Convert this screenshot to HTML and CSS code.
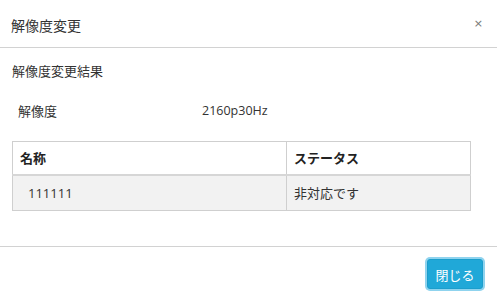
FILE: index.html
```html
<!DOCTYPE html>
<html lang="ja">
<head>
<meta charset="utf-8">
<link rel="stylesheet" href="styles.css">
</head>
<body>
<div class="dialog">
  <div class="header">
    <div class="title">解像度変更</div>
    <div class="close">×</div>
  </div>
  <div class="content">
    <div class="subtitle">解像度変更結果</div>
    <div class="info-row">
      <div class="label">解像度</div>
      <div class="value">2160p30Hz</div>
    </div>
    <table class="result">
      <thead>
        <tr><th class="col-name">名称</th><th>ステータス</th></tr>
      </thead>
      <tbody>
        <tr><td class="cell-name">111111</td><td>非対応です</td></tr>
      </tbody>
    </table>
  </div>
  <div class="footer">
    <button class="btn-close">閉じる</button>
  </div>
</div>
</body>
</html>
```
FILE: styles.css
```css
html, body {
  margin: 0;
  padding: 0;
  background: #fff;
}
body {
  font-family: "Noto Sans CJK JP", "Noto Sans", sans-serif;
  color: #333;
  font-size: 13px;
  width: 497px;
  height: 301px;
  overflow: hidden;
}
.dialog {
  width: 497px;
}
.header {
  height: 47px;
  border-bottom: 1px solid #d2d2d2;
  display: flex;
  align-items: center;
  justify-content: space-between;
  padding: 0 14px 0 11px;
}
.title {
  font-size: 14px;
  line-height: 20px;
  color: #333;
  padding-top: 2px;
}
.close {
  font-size: 11px;
  color: #777;
  line-height: 12px;
  font-family: "DejaVu Sans", sans-serif;
}
.content {
  padding: 13px 26px 35px 12px;
  border-bottom: 1px solid #d2d2d2;
}
.subtitle {
  line-height: 20px;
  font-size: 13px;
}
.info-row {
  display: flex;
  margin-top: 20px;
  line-height: 20px;
}
.label {
  width: 184px;
  padding-left: 6px;
}
.value {
  font-family: "Open Sans", "Noto Sans CJK JP", sans-serif;
  font-size: 12.5px;
}
.result {
  margin-top: 20px;
  width: 100%;
  border-collapse: collapse;
  font-size: 13px;
}
.result th, .result td {
  border: 1px solid #cfcfcf;
  text-align: left;
  line-height: 20px;
}
.result th {
  font-weight: bold;
  color: #222;
  padding: 6px 7px;
  background: #fff;
  border-bottom: 2px solid #d6d6d6;
}
.result th.col-name {
  width: 259px;
}
.result td {
  background: #f2f2f2;
  padding: 7px 7px;
}
.result td.cell-name {
  padding-left: 15px;
  font-family: "Open Sans", "Noto Sans CJK JP", sans-serif;
}
.footer {
  display: flex;
  justify-content: flex-end;
  padding: 12px 14px 0 0;
}
.btn-close {
  font-family: "Noto Sans CJK JP", sans-serif;
  font-size: 13px;
  color: #fff;
  background: #20a8d8;
  border: 1px solid #1c9ecc;
  border-radius: 3px;
  width: 56px;
  height: 30px;
  padding: 0;
  box-shadow: 0 0 0 2px #8fd3ee;
}
```
